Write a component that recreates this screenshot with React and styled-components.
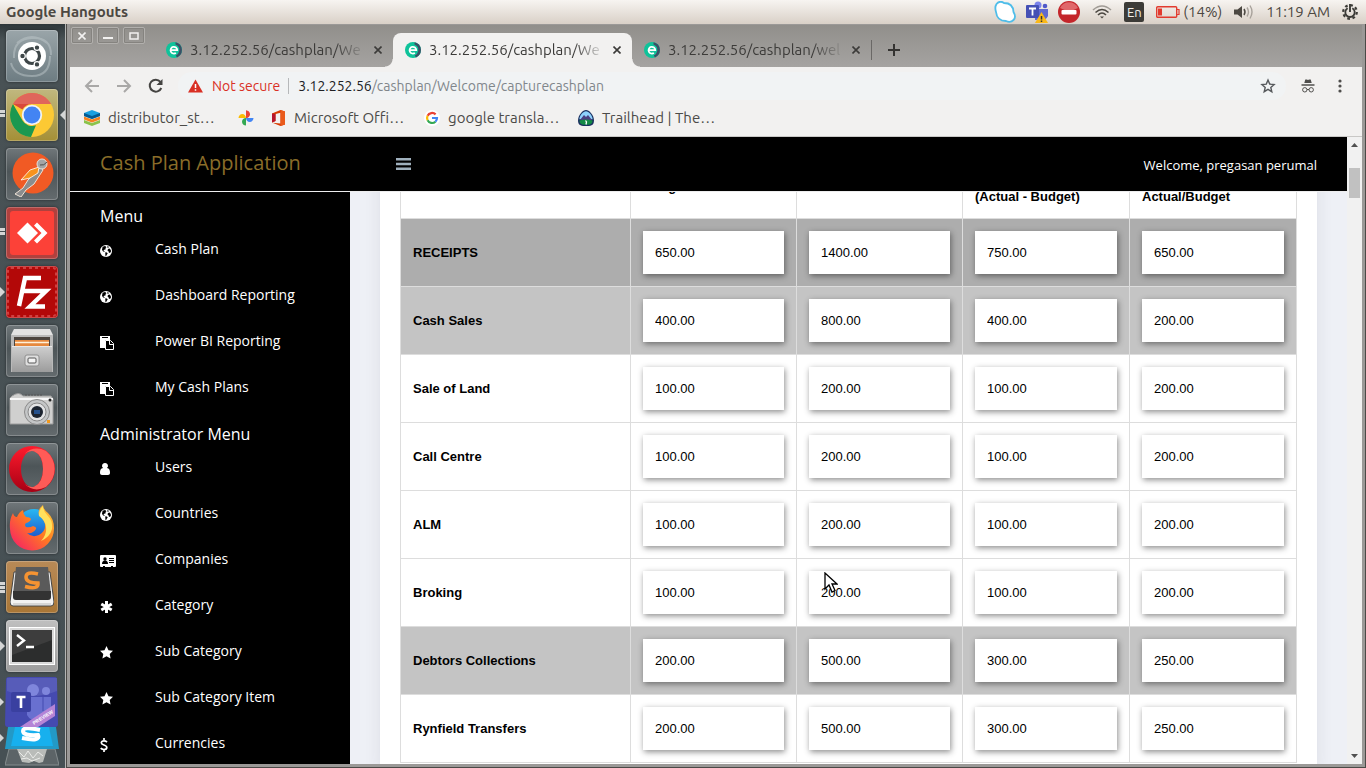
import React from "react";
import styled, { createGlobalStyle, css } from "styled-components";

const GlobalStyle = createGlobalStyle`
  *, *::before, *::after { box-sizing: border-box; }
  html, body, #root { height: 100%; }
  body { margin: 0; overflow: hidden; font-family: "Open Sans", sans-serif; }
  button { font: inherit; color: inherit; border: 0; padding: 0; background: none; }
  ul { margin: 0; padding: 0; list-style: none; }
  a { color: inherit; text-decoration: none; }
  svg { display: block; flex: none; }
`;

const systemFont = css`font-family: Ubuntu, "Noto Sans", sans-serif;`;

/* ---------- desktop ---------- */

const Desktop = styled.div`
  height: 100vh;
  display: flex;
  flex-direction: column;
  background: #4b4a47;
  overflow: hidden;
`;

const TopPanel = styled.header`
  ${systemFont}
  flex: none;
  height: 24px;
  display: flex;
  align-items: center;
  justify-content: space-between;
  padding: 0 8px 0 6px;
  color: #4c4842;
  font-size: 15px;
  line-height: 20px;
  background: linear-gradient(#f7f4f1, #d9d0c7);
`;

const PanelTitle = styled.strong`
  font-size: 15px;
`;

const Tray = styled.div`
  display: flex;
  align-items: center;
  gap: 12px;
`;

const TrayGroup = styled.div`
  display: flex;
  align-items: center;
  gap: ${(p) => p.$gap || 3}px;
`;

const Language = styled.span`
  width: 20px;
  height: 20px;
  border-radius: 2px;
  background: #3c3b37;
  color: #f2efea;
  font-size: 13px;
  text-align: center;
`;

const Workspace = styled.div`
  flex: 1;
  min-height: 0;
  display: flex;
`;

const Launcher = styled.nav`
  flex: none;
  width: 66px;
  padding: 6px 0 0 6px;
  overflow: hidden;
  border-right: 1px solid #b4b5b4;
  background: linear-gradient(#2e3639, #495255 16px, #465054);
`;

const LauncherTile = styled.button`
  position: relative;
  display: flex;
  align-items: center;
  justify-content: center;
  width: 52px;
  height: 52px;
  margin-bottom: 7px;
  border-radius: 4px;
  background: ${(p) => p.$bg || "linear-gradient(#70777a, #4d5558 45%, #646b6e)"};
  box-shadow: inset 0 0 0 1px rgba(255, 255, 255, 0.22), 0 0 3px rgba(0, 0, 0, 0.5);
`;

const FoldedStack = styled.div`
  width: 54px;
  margin: -2px 0 0 -1px;
`;

const StackButton = styled.button`
  position: relative;
  display: block;
`;

const markHeights = { two: 7, three: 11, arrow: 10 };

const RunningMark = styled.span`
  position: absolute;
  left: -6px;
  top: calc(50% - 5px);
  width: 5px;
  height: ${(p) => markHeights[p.$kind]}px;
  background: ${(p) =>
    p.$kind === "arrow"
      ? "#d5d6d6"
      : "repeating-linear-gradient(#d5d6d6 0 3px, transparent 3px 4px)"};
  ${(p) => p.$kind === "arrow" && css`clip-path: polygon(0 0, 100% 50%, 0 100%);`}
`;

const FocusMark = styled.span`
  position: absolute;
  right: -7px;
  top: 21px;
  width: 5px;
  height: 10px;
  background: #d5d6d6;
  clip-path: polygon(100% 0, 0 50%, 100% 100%);
`;

/* ---------- browser window ---------- */

const Window = styled.main`
  flex: 1;
  min-width: 0;
  display: flex;
  flex-direction: column;
  border: solid #9b9997;
  border-width: 1px 3px 3px 3px;
  margin: 0 1px 1px 1px;
  background: #f2f1f0;
`;

const TabStrip = styled.div`
  ${systemFont}
  flex: none;
  height: 42px;
  display: flex;
  background: linear-gradient(#918f8b, #a5a3a1);
`;

const WindowControls = styled.div`
  display: flex;
  gap: 4px;
  width: 84px;
  padding: 2px 0 0 1px;
`;

const ControlButton = styled.button`
  width: 22px;
  height: 17px;
  display: flex;
  align-items: center;
  justify-content: center;
  border: 1px solid #b2b0ad;
  border-radius: 2px;
  box-shadow: inset 0 0 0 1px #85837f;
`;

const activeTab = css`
  position: relative;
  background: #f2f1f0;
  &::before, &::after {
    content: "";
    position: absolute;
    bottom: 0;
    width: 8px;
    height: 8px;
  }
  &::before {
    right: 100%;
    background: radial-gradient(circle at 0 0, transparent 7px, #f2f1f0 8px);
  }
  &::after {
    left: 100%;
    background: radial-gradient(circle at 100% 0, transparent 7px, #f2f1f0 8px);
  }
`;

const Tab = styled.div`
  display: flex;
  align-items: center;
  gap: 8px;
  width: 239px;
  height: 34px;
  margin-top: 8px;
  padding: 0 7px 0 12px;
  border-radius: 8px 8px 0 0;
  color: #3c3b39;
  font-size: 15px;
  ${(p) => p.$active && activeTab}
`;

const TabTitle = styled.span`
  flex: 1;
  min-width: 0;
  overflow: hidden;
  white-space: nowrap;
  line-height: 20px;
  mask-image: linear-gradient(90deg, #000 84%, rgba(0, 0, 0, 0.15));
`;

const IconButton = styled.button`
  display: flex;
  align-items: center;
  justify-content: center;
  width: ${(p) => p.$size || 16}px;
  height: ${(p) => p.$size || 16}px;
`;

const TabEnd = styled.div`
  display: flex;
  align-items: center;
  height: 34px;
  margin-top: 8px;
  gap: 14px;
  &::before {
    content: "";
    width: 1px;
    height: 20px;
    background: #6a6866;
  }
`;

const Toolbar = styled.div`
  ${systemFont}
  flex: none;
  display: flex;
  align-items: center;
  height: 37px;
  padding: 0 14px;
  gap: 16px;
`;

const AddressBar = styled.div`
  flex: 1;
  min-width: 0;
  display: flex;
  align-items: center;
  height: 28px;
  margin: 0 -2px;
  padding: 0 10px;
  border-radius: 14px;
  background: #f1f3f4;
  font-size: 14px;
  line-height: 20px;
  color: #80868b;
`;

const NotSecure = styled.span`
  padding: 0 8px 0 9px;
  margin-right: 9px;
  border-right: 1px solid #b6b8ba;
  line-height: 16px;
  color: #d93025;
`;

const Url = styled.span`
  flex: 1;
  b { font-weight: 400; color: #202124; }
`;

const Bookmarks = styled.div`
  ${systemFont}
  flex: none;
  display: flex;
  align-items: center;
  height: 33px;
  padding: 0 14px 5px;
  gap: 18px;
  border-bottom: 1px solid #c9c8c6;
  font-size: 15px;
  line-height: 20px;
  color: #4c4b48;
`;

const Bookmark = styled.a`
  display: flex;
  align-items: center;
  gap: 8px;
  min-width: ${(p) => p.$min || 0}px;
`;

const Page = styled.div`
  flex: 1;
  min-height: 0;
  display: flex;
  background: #eef0f6;
`;

const ScrollTrack = styled.div`
  flex: none;
  width: 15px;
  display: flex;
  flex-direction: column;
  align-items: center;
  padding: 6px 0;
  background: #f1f1f1;
`;

const ScrollThumb = styled.div`
  width: 11px;
  height: 30px;
  margin: 21px 0 auto;
  background: #c1c1c1;
`;

/* ---------- cash plan application ---------- */

const Application = styled.div`
  flex: 1;
  min-width: 0;
  display: flex;
  flex-direction: column;
`;

const AppHeader = styled.header`
  flex: none;
  display: flex;
  align-items: center;
  height: 55px;
  padding: 2px 30px 0;
  border-bottom: 1px solid #ededee;
  background: #000;
  color: #fff;
`;

const Brand = styled.h1`
  margin: 0;
  width: 296px;
  padding-bottom: 4px;
  font-size: 20px;
  line-height: 28px;
  font-weight: 400;
  color: #8a6d29;
`;

const Welcome = styled.span`
  margin-left: auto;
  font-size: 13px;
  line-height: 20px;
`;

const AppBody = styled.div`
  flex: 1;
  min-height: 0;
  display: flex;
  overflow: hidden;
`;

const Sidebar = styled.nav`
  flex: none;
  width: 280px;
  padding: 1px 30px 0;
  background: #000;
  color: #fff;
`;

const SectionTitle = styled.h2`
  margin: 0;
  padding-top: 12px;
  font-size: 16px;
  line-height: 22px;
  font-weight: 400;
`;

const MenuLink = styled.a`
  display: grid;
  grid-template-columns: 55px 1fr;
  height: 46px;
  padding-top: 12px;
  font-size: 14px;
  line-height: 20px;
  svg { margin-top: 5px; }
`;

const Content = styled.section`
  flex: 1;
  min-width: 0;
  overflow: hidden;
  padding: 0 30px;
`;

const Card = styled.div`
  margin-top: -58px;
  padding: 20px 20px 8px;
  background: #fff;
  box-shadow: 0 0 16px rgba(40, 40, 60, 0.09);
`;

const PlanTable = styled.table`
  width: 100%;
  table-layout: fixed;
  border-collapse: collapse;
  font-family: "Liberation Sans", Arial, sans-serif;
  font-size: 13px;
  line-height: 20px;
  color: #000;
  th, td {
    padding: 12px;
    border: 1px solid #ddd;
    text-align: left;
    vertical-align: middle;
  }
`;

const Column = styled.col`
  width: ${(p) => p.$width};
`;

const HeadRow = styled.tr`
  height: 64px;
  && th { padding-bottom: 11px; }
`;

const RatioHead = styled.th`
  && { vertical-align: bottom; }
`;

const rowColors = { total: "#adadad", group: "#c4c4c4", line: "#fff" };

const PlanRow = styled.tr`
  background: ${(p) => rowColors[p.$kind]};
`;

const AmountCell = styled.td`
  position: relative;
`;

const AmountInput = styled.input`
  display: block;
  width: 100%;
  height: 43px;
  padding: 0 12px;
  border: 0;
  border-radius: 0;
  background: #fff;
  color: #000;
  font: inherit;
  box-shadow: 1px 2px 6px rgba(0, 0, 0, 0.45);
`;

const Pointer = styled.svg`
  position: absolute;
  left: 27px;
  top: 13px;
`;

/* ---------- small drawings ---------- */

const Favicon = () => (
  <svg width="16" height="16" viewBox="0 0 16 16">
    <circle cx="8" cy="8" r="8" fill="#0fc39a" />
    <path d="M9.500.2A8 8 0 0 1 11 15.400L9.800 13.400Q12.800 12 13.200 9V6Q12.500 3.500 9.500 2.500z" fill="#3b4f66" />
    <path d="M4.800 8.100h6.500a3.400 3.400 0 1 0-1.400 2.900" fill="none" stroke="#fff" strokeWidth="1.700" />
  </svg>
);

const Cross = ({ size = 8, color = "#3c3b39", weight = 1.6 }) => (
  <svg width={size} height={size} viewBox="0 0 8 8">
    <path d="M.5.5l7 7M7.500.5l-7 7" stroke={color} strokeWidth={weight} fill="none" />
  </svg>
);

const Plus = () => (
  <svg width="12" height="12" viewBox="0 0 12 12">
    <path d="M6 0v12M0 6h12" stroke="#343331" strokeWidth="2" />
  </svg>
);

const Arrow = ({ forward }) => (
  <svg width="16" height="16" viewBox="0 0 16 16">
    <path
      d={forward ? "M1 8h13M8 2l6 6-6 6" : "M15 8H2M8 2L2 8l6 6"}
      fill="none"
      stroke="#a9a8a7"
      strokeWidth="2"
    />
  </svg>
);

const Reload = () => (
  <svg width="16" height="16" viewBox="0 0 16 16">
    <path d="M13.300 10A6 6 0 1 1 12.400 3.800" fill="none" stroke="#454442" strokeWidth="2" />
    <path d="M14.500 1v6H8.500z" fill="#454442" />
  </svg>
);

const Warning = () => (
  <svg width="15" height="14" viewBox="0 0 15 14">
    <path d="M7.500.5L15 13.500H0z" fill="#d93025" />
    <path d="M7.500 5v4M7.500 10.200v1.600" stroke="#fff" strokeWidth="1.500" />
  </svg>
);

const StarOutline = () => (
  <svg width="16" height="16" viewBox="0 0 16 16">
    <path d="M8 2l1.700 4.100 4.400.4-3.300 2.900 1 4.300L8 11.400l-3.800 2.300 1-4.300-3.300-2.900 4.400-.4z" fill="none" stroke="#55585b" strokeWidth="1.400" />
  </svg>
);

const Incognito = () => (
  <svg width="14" height="14" viewBox="0 0 14 14" fill="none" stroke="#4f4e4c">
    <path d="M4.300.5h1.500L7 1l1.200-.5h1.500l1 3.500H3.300z" fill="#4f4e4c" stroke="none" />
    <path d="M.5 6h13" strokeWidth="1.500" />
    <circle cx="3.800" cy="10.800" r="2.200" />
    <circle cx="10.200" cy="10.800" r="2.200" />
    <path d="M6 10.500h2" />
  </svg>
);

const Dots = () => (
  <svg width="4" height="14" viewBox="0 0 4 14" fill="#4f4e4c">
    <circle cx="2" cy="2" r="1.600" />
    <circle cx="2" cy="7" r="1.600" />
    <circle cx="2" cy="12" r="1.600" />
  </svg>
);

const Layers = () => (
  <svg width="16" height="16" viewBox="0 0 16 16">
    <path d="M0 10l8 3 8-3v3l-8 3-8-3z" fill="#8bc34a" />
    <path d="M0 6.500l8 3 8-3v3l-8 3-8-3z" fill="#f58220" />
    <path d="M0 3l8-3 8 3v3L8 9 0 6z" fill="#1aa0e0" />
    <path d="M0 3l8 3 8-3v3L8 9 0 6z" fill="#065a91" />
  </svg>
);

const Photos = () => (
  <svg width="16" height="16" viewBox="0 0 16 16">
    <path d="M8 .5a3.800 3.800 0 0 1 0 7.500z" fill="#ea4335" />
    <path d="M8 .5c2.300 0 4 1.700 4 3.800S10.300 8 8 8z" fill="#ea4335" />
    <path d="M15.500 8c0 2.300-1.700 4-3.800 4S8 10.300 8 8z" fill="#4285f4" />
    <path d="M8 15.500c-2.300 0-4-1.700-4-3.800S5.700 8 8 8z" fill="#34a853" />
    <path d="M.5 8c0-2.300 1.700-4 3.800-4S8 5.700 8 8z" fill="#fbbc04" />
  </svg>
);

const Office = () => (
  <svg width="14" height="16" viewBox="0 0 14 16">
    <path d="M0 3.500L8.500 0 13 1.500v13L8.500 16 .5 12.800l8 .6V2.700L3.500 4v7L0 12.500z" fill="#d83b01" />
    <path d="M8.500 0L13 1.500v13L8.500 16z" fill="#ea5a1b" />
    <path d="M0 3.500L3.500 4v7L0 12.500z" fill="#b7142b" />
  </svg>
);

const GoogleMark = () => (
  <svg width="16" height="16" viewBox="0 0 16 16">
    <circle cx="8" cy="8" r="8" fill="#fff" />
    <g fill="none" strokeWidth="2.200">
      <path d="M11.600 4.400A5 5 0 0 0 3.600 5.800" stroke="#ea4335" />
      <path d="M3.600 5.800a5 5 0 0 0 0 4.400" stroke="#fbbc04" />
      <path d="M3.600 10.200a5 5 0 0 0 7.800 1.500" stroke="#34a853" />
      <path d="M11.400 11.700A5 5 0 0 0 13 8H8" stroke="#4285f4" />
    </g>
  </svg>
);

const Trailhead = () => (
  <svg width="16" height="16" viewBox="0 0 16 16">
    <path d="M8 0c3 0 8 5 8 10.500S12 16 8 16s-8 0-8-5.500S5 0 8 0z" fill="#1b3060" />
    <path d="M8 1.200c2.500 0 6.600 4.300 6.600 8H1.400c0-3.700 4.100-8 6.600-8z" fill="#8ed1fc" />
    <path d="M2 10l4-5 2 2 2-2 4 5z" fill="#4b3f80" />
    <path d="M1.500 10.500q6.500-2 13 0c0 3.700-2.500 4.300-6.500 4.300s-6.500-.6-6.500-4.300z" fill="#138a45" />
    <path d="M7.500 10.500l1 1.500-.5 2.500" stroke="#fff" strokeWidth="1.300" fill="none" />
  </svg>
);

const ScrollArrow = ({ down }) => (
  <svg width="7" height="4" viewBox="0 0 7 4">
    <path d={down ? "M0 0h7L3.500 4z" : "M0 4h7L3.500 0z"} fill="#505050" />
  </svg>
);

const Hamburger = () => (
  <svg width="15" height="14" viewBox="0 0 15 14">
    <path d="M0 1.300h15M0 6h15M0 10.700h15" stroke="#9fb0bd" strokeWidth="2.400" />
  </svg>
);

const menuShapes = {
  globe: {
    w: 12,
    body: (
      <>
        <circle cx="6" cy="7" r="6" fill="#fff" />
        <path d="M2.600 2.800L5 1.900l1 .5L5.600 3.300l.9.2L5.300 4.700l.3.900-1.500.1-.6.9 1.200.9-.3.500-1.500-.8L2 5.700zM7.200 2.200l1.800.6-.6.9-1.200-.3zM8 5l1.600-.5 1.200 1.500.2 1.500-1 1.500-1.200-.4-.3-1.300-1-.8zM5.300 8.200l1.600.4.8 1-.9 1.100-.8 1.600-.5-.1-.2-1.900z" fill="#000" />
      </>
    ),
  },
  paste: {
    w: 14,
    body: (
      <>
        <path d="M0 0h10v4H6L5 5v7H0z" fill="#fff" />
        <path d="M2 1h6v1H2z" fill="#000" />
        <path d="M5.500 4.500h5l3 3v6h-8z" fill="#000" stroke="#fff" />
        <path d="M9.500 4.500v4h4" fill="none" stroke="#fff" />
      </>
    ),
  },
  user: {
    w: 10,
    body: (
      <path d="M5 1a2.900 2.900 0 0 1 2 5.100C9.300 6.300 10 8.200 10 10.800 10 12.200 9.200 13 8 13H2c-1.200 0-2-.8-2-2.200C0 8.200.7 6.300 3 6.100A2.900 2.900 0 0 1 5 1z" fill="#fff" />
    ),
  },
  card: {
    w: 16,
    body: (
      <>
        <path d="M1 1h14q1 0 1 1v10q0 1-1 1h-2v-1h-2v1H5v-1H3v1H1q-1 0-1-1V2q0-1 1-1z" fill="#fff" />
        <circle cx="5" cy="5" r="1.700" />
        <path d="M2 10Q2 6.500 5 6.500T8 10zM9 4h5v1H9zM9 6h5v1H9zM9 8h5v1H9z" />
      </>
    ),
  },
  asterisk: {
    w: 13,
    body: <path d="M6.500 1v12M1.300 4l10.400 6M11.700 4L1.300 10" stroke="#fff" strokeWidth="3" />,
  },
  star: {
    w: 13,
    body: <path d="M6.500 0l2 4.200 4.500.6-3.300 3.200.9 4.500-4.100-2.200-4.100 2.200.9-4.500L0 4.800l4.500-.6z" fill="#fff" />,
  },
  dollar: {
    w: 8,
    body: (
      <path d="M4 0v2M4 12v2M7 4.100Q5.800 2.900 4 2.900 1.300 2.900 1.300 4.800C1.300 7.400 6.800 6.500 6.800 9.500q0 2-2.800 2-2 0-3.300-1.400" fill="none" stroke="#fff" strokeWidth="1.700" />
    ),
  },
};

const MenuIcon = ({ name }) => (
  <svg width={menuShapes[name].w} height="14" viewBox={`0 0 ${menuShapes[name].w} 14`}>
    {menuShapes[name].body}
  </svg>
);

/* launcher drawings */

const UbuntuDash = () => (
  <svg width="50" height="50" viewBox="0 0 50 50">
    <g fill="none" stroke="#c6ced1" strokeOpacity=".45" strokeWidth="2">
      <path d="M7 27Q6 8 25 7t19 17M43 25q0 20-18 20T4 32M10 12Q25 0 40 12" />
    </g>
    <circle cx="25" cy="25" r="14" fill="#fff" />
    <circle cx="25" cy="25" r="7.500" fill="none" stroke="#3e4648" strokeWidth="3.200" />
    <g fill="#3e4648" stroke="#fff" strokeWidth="1.200">
      <circle cx="15.500" cy="25" r="2.800" />
      <circle cx="30" cy="16.600" r="2.800" />
      <circle cx="30" cy="33.400" r="2.800" />
    </g>
  </svg>
);

const ChromeLogo = () => (
  <svg width="46" height="46" viewBox="0 0 46 46">
    <circle cx="23" cy="23" r="22" fill="#fcc934" />
    <path d="M4 12A22 22 0 0 1 42 12H23a11 11 0 0 0-9.600 5.600z" fill="#d9483b" />
    <path d="M4 12l9.500 16.500A11 11 0 0 0 27 33.300L22 45A22 22 0 0 1 4 12z" fill="#1a9850" />
    <path d="M4 12A22 22 0 0 1 42 12z" fill="#e57b71" opacity=".6" />
    <circle cx="23" cy="23" r="10.200" fill="#f1f3f4" />
    <circle cx="23" cy="23" r="8.400" fill="#4384f3" />
  </svg>
);

const Postman = () => (
  <svg width="46" height="46" viewBox="0 0 46 46">
    <circle cx="24" cy="22" r="20.500" fill="#f15a24" />
    <path d="M32 16L19 29l-5 8-8 6 6 3 5-7 8-6 9-14z" fill="#8b8d8e" stroke="#eee2d6" />
    <path d="M30 16l-9 3-9 10 9-2 8-5z" fill="#f7931e" stroke="#fff" strokeWidth=".8" />
    <circle cx="33" cy="13" r="5" fill="#a4a5a5" stroke="#e7e1db" />
    <path d="M31 14q4 1 7-3" stroke="#4e4e4e" fill="none" />
  </svg>
);

const AnyDesk = () => (
  <svg width="44" height="44" viewBox="0 0 44 44">
    <rect width="44" height="44" rx="3" fill="#fc4138" />
    <path d="M7 22l10.500-10.500L28 22 17.500 32.500z" fill="#fff" />
    <path d="M24 14.500l3-3L37.500 22 27 32.500l-3-3 7.500-7.500z" fill="#fff" />
  </svg>
);

const FileZilla = () => (
  <svg width="50" height="50" viewBox="0 0 50 50">
    <rect width="50" height="50" rx="4" fill="#b30808" />
    <rect x="1" y="1" width="48" height="48" rx="3" fill="none" stroke="#cf4040" strokeWidth="2" strokeDasharray="3 3" />
    <g fill="none" stroke="#fff" strokeWidth="4.500">
      <path d="M34 11H18l-6 28M15 24h12M25 24h14L23 39.500h15" />
    </g>
  </svg>
);

const FilesCabinet = () => (
  <svg width="42" height="44" viewBox="0 0 42 44">
    <defs>
      <linearGradient id="cabinetFront" x1="0" y1="0" x2="0" y2="1">
        <stop stopColor="#cfcfcf" />
        <stop offset="1" stopColor="#9c9c9c" />
      </linearGradient>
    </defs>
    <path d="M3 0h36l3 6v37H0V6z" fill="#e2e2e2" />
    <path d="M0 6h42v37H0z" fill="#b9b9b9" />
    <path d="M3 8h36v10H3z" fill="#4b443f" />
    <path d="M4 11h34v7H4z" fill="#e6883d" />
    <path d="M4 13.500h34" stroke="#fff0d8" strokeWidth="1.500" />
    <path d="M1 17h40v26H1z" fill="url(#cabinetFront)" />
    <path d="M1 17.500h40" stroke="#e8e8e8" />
    <rect x="14" y="26" width="14" height="11" rx="2" fill="#dedede" stroke="#8f8f8f" />
    <rect x="17" y="29" width="8" height="5" rx="1" fill="#f5f5f5" stroke="#555" />
  </svg>
);

const Camera = () => (
  <svg width="46" height="34" viewBox="0 0 46 34">
    <path d="M3 3q7-5 11 0h28l2 3v25H1V5z" fill="#d0d0cf" stroke="#9c9c9c" />
    <path d="M1 6h43" stroke="#f7f7f7" strokeWidth="2" />
    <path d="M16 2h18" stroke="#555" strokeDasharray="2 1" />
    <circle cx="28" cy="19" r="12.500" fill="#c4c6c7" stroke="#8a8a8a" />
    <circle cx="28" cy="19" r="9" fill="#e2e3e4" stroke="#888" />
    <circle cx="28" cy="19" r="6" fill="#1c2430" />
    <path d="M25 17h6v4h-6z" fill="#24508c" />
    <rect x="38" y="27" width="3" height="3" fill="#f29a1d" />
    <circle cx="41" cy="7" r="1.500" fill="#222" />
  </svg>
);

const OperaLogo = () => (
  <svg width="46" height="46" viewBox="0 0 46 46">
    <defs>
      <linearGradient id="operaRed" x1="0" y1="0" x2="0" y2="1">
        <stop stopColor="#ff1b2d" />
        <stop offset="1" stopColor="#a70014" />
      </linearGradient>
    </defs>
    <path fillRule="evenodd" d="M23 0a23 23 0 1 1 0 46 23 23 0 0 1 0-46zm0 5c-6 0-11 8-11 18s5 18 11 18 11-8 11-18S29 5 23 5z" fill="url(#operaRed)" />
    <path d="M15.500 8Q25-1 37 5a23 23 0 0 1 0 36q-12 6-21.500-3Q20 42 25 40.800 34 37 34 23T25 5.200Q20 4 15.500 8z" fill="#ff5b57" />
  </svg>
);

const FirefoxLogo = () => (
  <svg width="46" height="48" viewBox="0 0 46 48">
    <defs>
      <linearGradient id="foxBody" x1="1" y1="0" x2="0" y2="1">
        <stop stopColor="#ffd43a" />
        <stop offset=".45" stopColor="#ff7a22" />
        <stop offset="1" stopColor="#f5146f" />
      </linearGradient>
      <linearGradient id="foxGlobe" x1="0" y1="0" x2="0" y2="1">
        <stop stopColor="#29b8f2" />
        <stop offset="1" stopColor="#1b46c4" />
      </linearGradient>
    </defs>
    <circle cx="25" cy="22" r="17" fill="url(#foxGlobe)" />
    <path d="M4 9q1 4 4 4 2-5 6-7 0 4 3 7 4 0 5 2-1 3-5 4-2 2 0 4 4 1 7-1 4 1 3 3-3 5-9 4 5 5 12 2 7-4 6-11-2-6-6-9-2-5 4-10 0 4 5 8 6 6 6 15a22 22 0 0 1-44 1Q0 16 4 9z" fill="url(#foxBody)" />
    <path d="M34 2q-5 5-4 10 6 4 7 11 1 8-5 14 9-4 11-12 1-8-4-13-5-5-5-10z" fill="#ffe05c" />
  </svg>
);

const SublimeLogo = () => (
  <svg width="44" height="42" viewBox="0 0 44 42">
    <path d="M4 6L0 36q0 4 3 4h38q3 0 3-4L40 6z" fill="#f2f2f2" stroke="#444" />
    <path d="M3 38h38" stroke="#bbb" />
    <path d="M6 1h32l3 27H3z" fill="#5a5a5a" />
    <path d="M3 25h38v6q0 3-3 3H6q-3 0-3-3z" fill="#333" />
    <path d="M28 8Q16 5 16 11t12 6q1 7-13 3.500" fill="none" stroke="#f59332" strokeWidth="3.500" />
  </svg>
);

const TerminalLogo = () => (
  <svg width="46" height="38" viewBox="0 0 46 38">
    <rect x=".5" y=".5" width="45" height="37" fill="#dadada" stroke="#fff" />
    <rect x="3" y="3" width="40" height="32" fill="#2c2d2d" />
    <path d="M3 3h40v10L3 28z" fill="#444" opacity=".7" />
    <path d="M8 8l7 5.500L8 19M17 20h8" stroke="#fff" strokeWidth="2.400" fill="none" />
  </svg>
);

const TeamsTile = () => (
  <svg width="54" height="50" viewBox="0 0 54 50">
    <path d="M4 0h46q2 0 2 3l1 44q0 3-3 3H3q-3 0-3-3L1 3q0-3 3-3z" fill="#454ab0" />
    <path d="M2 1h50v13Q27 24 2 14z" fill="#7277c9" opacity=".4" />
    <circle cx="28" cy="13" r="6" fill="#7f86dc" />
    <circle cx="41" cy="14" r="4" fill="#7f86dc" />
    <path d="M22 20h24v14q-2 10-12 10-9 0-12-6z" fill="#6970d0" />
    <path d="M38 20v14" stroke="#454ab0" />
    <rect x="6" y="15" width="20" height="20" rx="2" fill="#3a40a0" />
    <path d="M11.500 20h9M16 20v11" stroke="#fff" strokeWidth="2.600" />
    <path d="M15 50L50 27v12L33 50z" fill="#b584d6" />
    <text transform="translate(29 48) rotate(-32)" fill="#fff" fontSize="5" fontWeight="700" fontFamily="Liberation Sans">PREVIEW</text>
  </svg>
);

const SkypeFold = () => (
  <svg width="54" height="22" viewBox="0 0 54 22">
    <path d="M3 0h48l3 22H0z" fill="#2399c6" />
    <path d="M10 0h34l4 19H6z" fill="#17b0ee" />
    <path d="M35 3Q18-1 18 4t15 4q3 7-16 3" fill="none" stroke="#fff" strokeWidth="4" />
  </svg>
);

const TrashFold = () => (
  <svg width="54" height="20" viewBox="0 0 54 20">
    <path d="M4 0h46l4 16H0z" fill="#5c6467" stroke="#858c8e" />
    <path d="M12 0h30l-4 13-4 1-5-2-5 2-7-1z" fill="#b9bcb9" />
    <path d="M14 3l5 5 4-6 5 7 5-6 5 4M16 10l6-1 5 3 8-3" stroke="#ebecea" fill="none" />
  </svg>
);

/* tray drawings */

const SkypeTray = () => (
  <svg width="22" height="22" viewBox="0 0 22 22">
    <path d="M2.500 3Q6-1 10 2q9 0 9.500 9 3 5 0 8t-7.500 1q-9 0-10-9-1.500-5 .5-8z" fill="#fff" stroke="#4fbde9" strokeWidth="1.800" />
  </svg>
);

const TeamsTray = () => (
  <svg width="22" height="22" viewBox="0 0 22 22">
    <circle cx="12" cy="4" r="3.500" fill="#7b83eb" />
    <circle cx="19" cy="5" r="2.300" fill="#5059c9" />
    <path d="M9 8h13v7q-2 4-5 4H9z" fill="#6169d0" />
    <rect y="4" width="13" height="13" rx="1" fill="#4550b5" />
    <path d="M3 7.500h7M6.500 7.500v7" stroke="#fff" strokeWidth="1.800" />
    <path d="M15.500 11L22 22H9z" fill="#fbb917" />
    <path d="M15.500 15v3.500M15.500 19.500v1.500" stroke="#333" strokeWidth="1.500" />
  </svg>
);

const NoEntry = () => (
  <svg width="22" height="22" viewBox="0 0 22 22">
    <circle cx="11" cy="11" r="11" fill="#c4262b" />
    <path d="M2 7a10 10 0 0 1 18 0q-9 5-18 0z" fill="#e0686a" />
    <rect x="3.500" y="9" width="15" height="4.500" rx="1" fill="#fff" />
  </svg>
);

const Wifi = () => (
  <svg width="20" height="14" viewBox="0 0 20 14" fill="none" strokeWidth="1.600">
    <path d="M1 5q9-8 18 0" stroke="#a09b95" />
    <path d="M3.500 7.500q6.500-6 13 0M6 10q4-4 8 0" stroke="#4c4842" />
    <path d="M8 11.500h4l-2 2z" fill="#4c4842" />
  </svg>
);

const Battery = () => (
  <svg width="24" height="12" viewBox="0 0 24 12">
    <rect x=".7" y=".7" width="20" height="10.600" rx="1" fill="none" stroke="#e23a2e" strokeWidth="1.400" />
    <path d="M21 3.500h2v5h-2" fill="none" stroke="#e23a2e" strokeWidth="1.200" />
    <rect x="2" y="2.500" width="4" height="7" fill="#e23a2e" />
  </svg>
);

const Volume = () => (
  <svg width="20" height="14" viewBox="0 0 20 14" fill="none">
    <path d="M0 4.500h3.500L8 1v12L3.500 9.500H0z" fill="#4c4842" />
    <path d="M10 4q2 3 0 6" stroke="#4c4842" strokeWidth="1.500" />
    <path d="M13 2.500q3 4.500 0 9M16 .5q4 6.500 0 13" stroke="#a8a29b" strokeWidth="1.400" />
  </svg>
);

const PowerGear = () => (
  <svg width="16" height="16" viewBox="0 0 16 16" fill="none" stroke="#3c3b37">
    <circle cx="8" cy="8" r="6.800" strokeWidth="2.200" strokeDasharray="2.700 2.640" />
    <path d="M5.700 4.200a4.700 4.700 0 1 0 4.600 0" strokeWidth="1.800" />
    <path d="M8 0v8" strokeWidth="1.900" />
  </svg>
);

/* ---------- data ---------- */

const launcherApps = [
  { label: "Search your computer", art: UbuntuDash, bg: "linear-gradient(#9aa5a9, #6d7c82)" },
  { label: "Google Chrome", art: ChromeLogo, bg: "linear-gradient(#c0b87f, #a48f36)", mark: "two", focus: true },
  { label: "Postman", art: Postman },
  { label: "AnyDesk", art: AnyDesk, bg: "#b0413e", mark: "two" },
  { label: "FileZilla", art: FileZilla, bg: "#c01818", mark: "arrow" },
  { label: "Files", art: FilesCabinet },
  { label: "Camera", art: Camera },
  { label: "Opera", art: OperaLogo },
  { label: "Firefox", art: FirefoxLogo },
  { label: "Sublime Text", art: SublimeLogo, bg: "linear-gradient(#b88a57, #a87636)", mark: "three" },
  { label: "Terminal", art: TerminalLogo, bg: "linear-gradient(#bfbfbf, #9d9d9d)", mark: "arrow" },
];

const tabs = [
  { title: "3.12.252.56/cashplan/Welcome" },
  { title: "3.12.252.56/cashplan/Welcome", active: true },
  { title: "3.12.252.56/cashplan/welcome" },
];

const bookmarks = [
  { label: "distributor_st…", art: Layers, min: 136 },
  { label: "", art: Photos },
  { label: "Microsoft Offi…", art: Office, min: 134 },
  { label: "google transla…", art: GoogleMark, min: 136 },
  { label: "Trailhead | The…", art: Trailhead },
];

const menus = [
  {
    title: "Menu",
    items: [
      ["globe", "Cash Plan"],
      ["globe", "Dashboard Reporting"],
      ["paste", "Power BI Reporting"],
      ["paste", "My Cash Plans"],
    ],
  },
  {
    title: "Administrator Menu",
    items: [
      ["user", "Users"],
      ["globe", "Countries"],
      ["card", "Companies"],
      ["asterisk", "Category"],
      ["star", "Sub Category"],
      ["star", "Sub Category Item"],
      ["dollar", "Currencies"],
    ],
  },
];

const columnWidths = ["230px", "166px", "166px", "167px", "auto"];

const planRows = [
  ["total", "RECEIPTS", "650.00", "1400.00", "750.00", "650.00"],
  ["group", "Cash Sales", "400.00", "800.00", "400.00", "200.00"],
  ["line", "Sale of Land", "100.00", "200.00", "100.00", "200.00"],
  ["line", "Call Centre", "100.00", "200.00", "100.00", "200.00"],
  ["line", "ALM", "100.00", "200.00", "100.00", "200.00"],
  ["line", "Broking", "100.00", "200.00", "100.00", "200.00"],
  ["group", "Debtors Collections", "200.00", "500.00", "300.00", "250.00"],
  ["line", "Rynfield Transfers", "200.00", "500.00", "300.00", "250.00"],
];

const amountNames = ["Budget", "Actual", "Actual - Budget", "Actual/Budget"];

/* ---------- sections ---------- */

const SystemPanel = () => (
  <TopPanel>
    <PanelTitle>Google Hangouts</PanelTitle>
    <Tray>
      <TrayGroup $gap={10}>
        <SkypeTray />
        <TeamsTray />
        <NoEntry />
      </TrayGroup>
      <Wifi />
      <Language>En</Language>
      <TrayGroup>
        <Battery />
        <span>(14%)</span>
      </TrayGroup>
      <Volume />
      <span>11:19 AM</span>
      <PowerGear />
    </Tray>
  </TopPanel>
);

const Dock = () => (
  <Launcher>
    {launcherApps.map(({ label, art: Art, bg, mark, focus }) => (
      <LauncherTile key={label} aria-label={label} $bg={bg}>
        {mark && <RunningMark $kind={mark} />}
        <Art />
        {focus && <FocusMark />}
      </LauncherTile>
    ))}
    <FoldedStack>
      <StackButton aria-label="Microsoft Teams"><RunningMark $kind="arrow" /><TeamsTile /></StackButton>
      <StackButton aria-label="Skype"><RunningMark $kind="arrow" /><SkypeFold /></StackButton>
      <StackButton aria-label="Trash"><TrashFold /></StackButton>
    </FoldedStack>
  </Launcher>
);

const BrowserChrome = () => (
  <>
    <TabStrip>
      <WindowControls>
        <ControlButton aria-label="Close window"><Cross color="#f2f1f0" /></ControlButton>
        <ControlButton aria-label="Minimize">
          <svg width="10" height="8" viewBox="0 0 10 8"><path d="M0 6h10" stroke="#f2f1f0" strokeWidth="2" /></svg>
        </ControlButton>
        <ControlButton aria-label="Maximize">
          <svg width="10" height="8" viewBox="0 0 10 8"><path d="M1 1h8v6H1z" fill="none" stroke="#f2f1f0" strokeWidth="1.500" /></svg>
        </ControlButton>
      </WindowControls>
      {tabs.map((tab, i) => (
        <Tab key={i} $active={tab.active}>
          <Favicon />
          <TabTitle>{tab.title}</TabTitle>
          <IconButton aria-label="Close tab"><Cross /></IconButton>
        </Tab>
      ))}
      <TabEnd>
        <IconButton aria-label="New tab"><Plus /></IconButton>
      </TabEnd>
    </TabStrip>
    <Toolbar>
      <IconButton aria-label="Back"><Arrow /></IconButton>
      <IconButton aria-label="Forward"><Arrow forward /></IconButton>
      <IconButton aria-label="Reload"><Reload /></IconButton>
      <AddressBar>
        <Warning />
        <NotSecure>Not secure</NotSecure>
        <Url><b>3.12.252.56</b>/cashplan/Welcome/capturecashplan</Url>
        <IconButton aria-label="Bookmark this page"><StarOutline /></IconButton>
      </AddressBar>
      <IconButton aria-label="Incognito"><Incognito /></IconButton>
      <IconButton aria-label="Browser menu"><Dots /></IconButton>
    </Toolbar>
    <Bookmarks>
      {bookmarks.map(({ label, art: Art, min }, i) => (
        <Bookmark key={i} href="#" $min={min} aria-label={label || "Photos"}>
          <Art />
          {label && <span>{label}</span>}
        </Bookmark>
      ))}
    </Bookmarks>
  </>
);

const SideMenu = () => (
  <Sidebar>
    {menus.map((menu) => (
      <React.Fragment key={menu.title}>
        <SectionTitle>{menu.title}</SectionTitle>
        <ul>
          {menu.items.map(([icon, label]) => (
            <li key={label}>
              <MenuLink href="#"><MenuIcon name={icon} />{label}</MenuLink>
            </li>
          ))}
        </ul>
      </React.Fragment>
    ))}
  </Sidebar>
);

const PlanSheet = () => (
  <Card>
    <PlanTable>
      <colgroup>
        {columnWidths.map((width, i) => <Column key={i} $width={width} />)}
      </colgroup>
      <thead>
        <HeadRow>
          <th aria-label="Item" />
          <th>Budget</th>
          <th aria-label="Actual" />
          <RatioHead>(Actual - Budget)</RatioHead>
          <RatioHead>Actual/Budget</RatioHead>
        </HeadRow>
      </thead>
      <tbody>
        {planRows.map(([kind, name, ...amounts]) => (
          <PlanRow key={name} $kind={kind}>
            <th scope="row">{name}</th>
            {amounts.map((amount, i) => (
              <AmountCell key={i}>
                <AmountInput aria-label={`${name} ${amountNames[i]}`} defaultValue={amount} />
                {name === "Broking" && i === 1 && (
                  <Pointer width="14" height="22" viewBox="0 0 14 22">
                    <path d="M1 1v16l4-4 3 7 3-1.500L8 12h5z" fill="#fff" stroke="#000" strokeWidth="1.300" />
                  </Pointer>
                )}
              </AmountCell>
            ))}
          </PlanRow>
        ))}
      </tbody>
    </PlanTable>
  </Card>
);

export default function App() {
  return (
    <>
      <GlobalStyle />
      <Desktop>
        <SystemPanel />
        <Workspace>
          <Dock />
          <Window>
            <BrowserChrome />
            <Page>
              <Application>
                <AppHeader>
                  <Brand>Cash Plan Application</Brand>
                  <IconButton aria-label="Toggle menu" $size={15}><Hamburger /></IconButton>
                  <Welcome>Welcome, pregasan perumal</Welcome>
                </AppHeader>
                <AppBody>
                  <SideMenu />
                  <Content><PlanSheet /></Content>
                </AppBody>
              </Application>
              <ScrollTrack>
                <ScrollArrow />
                <ScrollThumb />
                <ScrollArrow down />
              </ScrollTrack>
            </Page>
          </Window>
        </Workspace>
      </Desktop>
    </>
  );
}
